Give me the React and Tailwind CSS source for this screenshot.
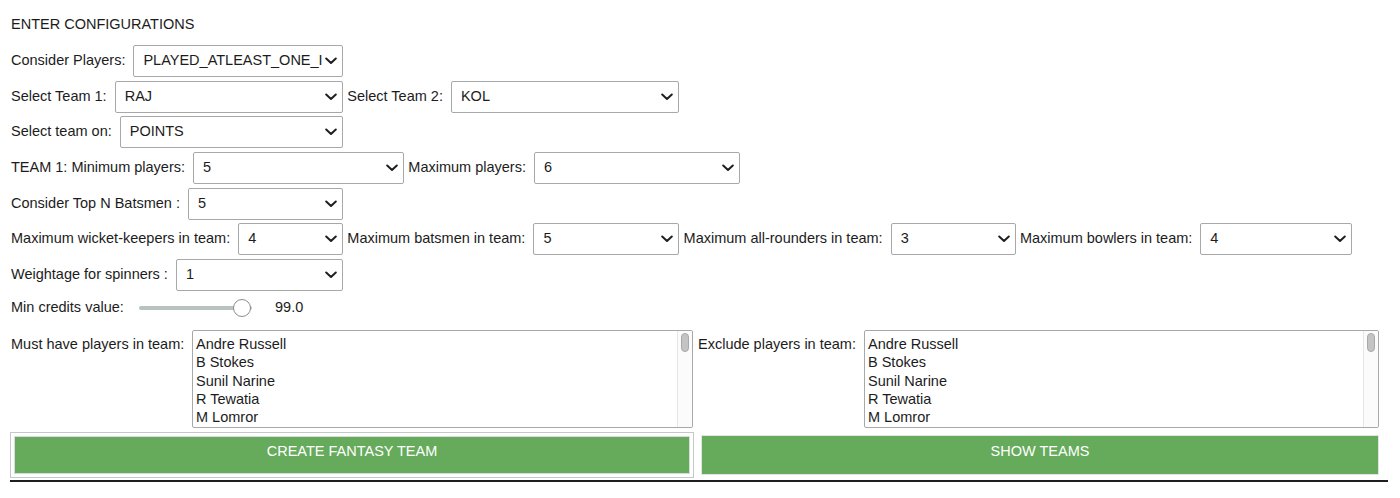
import React from "react";

function Chevron() {
  return (
    <svg width="12" height="8" viewBox="0 0 12 8" className="shrink-0">
      <path d="M1.2 1.5 L6 6 L10.8 1.5" fill="none" stroke="#1f1f1f" strokeWidth="2" strokeLinecap="round" strokeLinejoin="round" />
    </svg>
  );
}

function Select({ value, className = "" }) {
  return (
    <div className={"h-[32px] border border-[#a8a8a8] rounded-[2px] bg-white flex items-center pl-[9px] pr-[5px] " + className}>
      <span className="flex-1 overflow-hidden whitespace-nowrap mr-[3px]">{value}</span>
      <Chevron />
    </div>
  );
}

function Field({ label, value, wide = false }) {
  return (
    <div className={(wide ? "w-[393px]" : "w-[332px]") + " flex items-center gap-[8px]"}>
      <span className="whitespace-nowrap">{label}</span>
      <Select value={value} className="flex-1 min-w-0" />
    </div>
  );
}

const players = ["Andre Russell", "B Stokes", "Sunil Narine", "R Tewatia", "M Lomror"];

function ListBox({ className = "" }) {
  return (
    <div className={"h-[98px] border border-[#a8a8a8] rounded-[2px] bg-white flex overflow-hidden " + className}>
      <div className="flex-1 pl-[3px] pt-[4px] leading-[18.3px] overflow-hidden">
        {players.map((p) => (
          <div key={p} className="whitespace-nowrap">{p}</div>
        ))}
      </div>
      <div className="w-[15px] border-l border-[#e6e6e6] bg-[#fbfbfb] flex justify-center pt-[2px]">
        <div className="w-[8px] h-[19px] rounded-full bg-[#c4c4c4] border border-[#a9a9a9]" />
      </div>
    </div>
  );
}

export default function App() {
  return (
    <div className="w-[1400px] h-[498px] bg-white text-[14.5px] text-[#1c1c1c] font-['Liberation_Sans',Arial,Helvetica,sans-serif] overflow-hidden">
      <div className="pl-[11px] pt-[16px]">
        <div className="leading-[17px] h-[17px]">ENTER CONFIGURATIONS</div>
        <div className="mt-[12px] flex flex-col gap-[3.67px]">
          <div className="flex items-center">
            <Field label="Consider Players:" value="PLAYED_ATLEAST_ONE_INNINGS" />
          </div>
          <div className="flex items-center gap-[4.3px]">
            <Field label="Select Team 1:" value="RAJ" />
            <Field label="Select Team 2:" value="KOL" />
          </div>
          <div className="flex items-center">
            <Field label="Select team on:" value="POINTS" />
          </div>
          <div className="flex items-center gap-[4.3px]">
            <Field label="TEAM 1: Minimum players:" value="5" wide />
            <Field label="Maximum players:" value="6" />
          </div>
          <div className="flex items-center">
            <Field label="Consider Top N Batsmen :" value="5" />
          </div>
          <div className="flex items-center gap-[4.3px]">
            <Field label="Maximum wicket-keepers in team:" value="4" />
            <Field label="Maximum batsmen in team:" value="5" />
            <Field label="Maximum all-rounders in team:" value="3" />
            <Field label="Maximum bowlers in team:" value="4" />
          </div>
          <div className="flex items-center">
            <Field label="Weightage for spinners :" value="1" />
          </div>
        </div>

        <div className="mt-[1px] h-[32px] flex items-center">
          <span className="w-[128px] whitespace-nowrap">Min credits value:</span>
          <div className="relative w-[113px] h-[18px] flex items-center">
            <div className="w-full h-[4px] rounded-full bg-[#b7c3bd]" />
            <div className="absolute left-[94px] top-0 w-[18px] h-[18px] rounded-full bg-white border border-[#8c8c8c]" />
          </div>
          <span className="ml-[23px]">99.0</span>
        </div>

        <div className="mt-[6px] flex gap-[5px]">
          <div className="w-[682px] flex items-start">
            <span className="whitespace-nowrap pt-[5px] leading-[18px] w-[181px]">Must have players in team:</span>
            <ListBox className="flex-1" />
          </div>
          <div className="w-[681px] flex items-start">
            <span className="whitespace-nowrap pt-[5px] leading-[18px] w-[166px]">Exclude players in team:</span>
            <ListBox className="flex-1" />
          </div>
        </div>
      </div>

      <div className="ml-[10px] w-[1378px] mt-[4px] border-b-2 border-[#1e1e1e] pb-[2px] flex gap-[7px]">
        <div className="w-[684px] h-[46px] border border-[#c3c8c8] p-[3px]">
          <div className="w-full h-full border border-[#d8dcdc] bg-[#66aa5c] text-white flex items-center justify-center pb-[6px] leading-[17px]">
            CREATE FANTASY TEAM
          </div>
        </div>
        <div className="pt-[3px]">
          <div className="w-[678px] h-[40px] border border-[#e2e5e5] bg-[#66aa5c] text-white flex items-center justify-center pb-[6px] leading-[17px]">
            SHOW TEAMS
          </div>
        </div>
      </div>
    </div>
  );
}
